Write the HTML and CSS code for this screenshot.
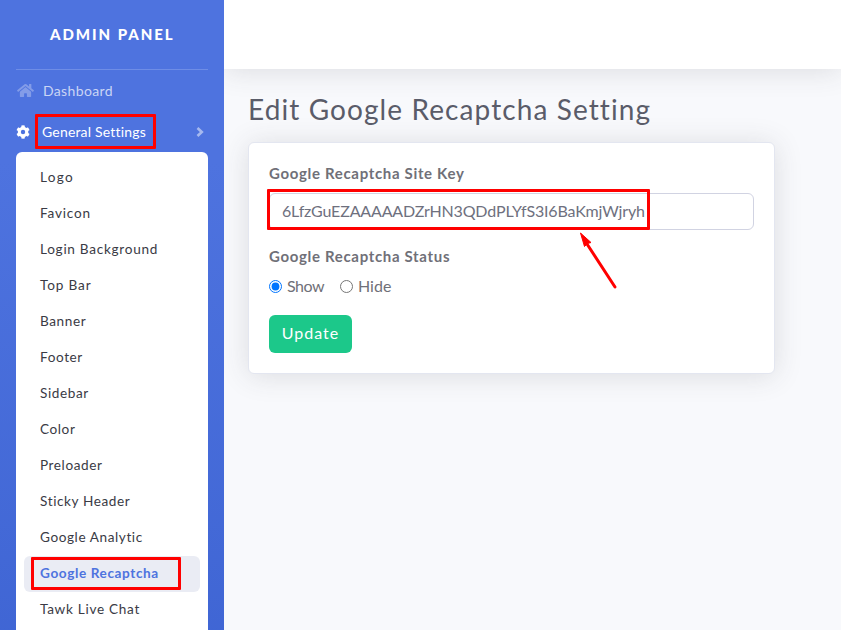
FILE: index.html
```html
<!DOCTYPE html>
<html lang="en">
<head>
<meta charset="utf-8">
<title>Admin Panel</title>
<link rel="stylesheet" href="styles.css">
</head>
<body>
<div class="wrapper">
  <nav class="sidebar">
    <div class="brand"><span>ADMIN PANEL</span></div>
    <hr class="divider">
    <a class="nav-link dashboard">
      <svg class="home" viewBox="0 0 576 512"><path d="M280 148L96 300v164q0 16 16 16h112q16-1 16-16v-96q0-16 16-16h64q16 0 16 16v96q0 16 16 16h112q16 0 16-16V300L296 148q-8-6-16 0zM572 251l-84-69V44q0-12-12-12h-56q-12 0-12 12v72l-90-74q-30-24-60 0L4 251q-8 8-1 17l25 31q8 8 17 2L280 107q8-6 16 0l235 194q9 7 17-2l25-31q7-9-1-17z"/></svg>
      <span>Dashboard</span>
    </a>
    <a class="nav-link general">
      <svg class="gear" viewBox="0 0 512 512"><path fill-rule="evenodd" d="M487 316l-42-25q7-35 0-70l42-25q8-4 6-13-17-53-54-94-6-7-14-2l-43 24q-27-23-60-35V27q0-9-9-11-57-12-110 0-9 2-9 11v49q-33 12-60 35L91 87q-8-5-14 2-37 41-54 94-2 9 6 13l42 25q-7 35 0 70l-42 25q-8 4-6 13 17 53 54 94 6 7 14 2l43-24q27 23 60 35v49q0 9 9 11 57 12 110 0 9-2 9-11v-49q33-12 60-35l43 24q8 5 14-2 37-41 54-94 2-9-6-13zM256 336a80 80 0 1 1 0-160 80 80 0 0 1 0 160z"/></svg>
      <span>General Settings</span>
      <svg class="chevron" viewBox="0 0 8 10"><path d="M1.5 1L5.8 5 1.5 9"/></svg>
    </a>
    <div class="submenu">
      <a class="item logo">Logo</a>
      <a class="item favicon">Favicon</a>
      <a class="item login">Login Background</a>
      <a class="item topbar-link">Top Bar</a>
      <a class="item banner">Banner</a>
      <a class="item footer">Footer</a>
      <a class="item side">Sidebar</a>
      <a class="item color">Color</a>
      <a class="item preloader">Preloader</a>
      <a class="item sticky">Sticky Header</a>
      <a class="item analytic">Google Analytic</a>
      <a class="item active">Google Recaptcha</a>
      <a class="item tawk">Tawk Live Chat</a>
    </div>
  </nav>
  <div class="content">
    <header class="topbar"></header>
    <main>
      <h1>Edit Google Recaptcha Setting</h1>
      <form class="card">
        <label class="label site-key" for="key">Google Recaptcha Site Key</label>
        <input class="control" id="key" type="text" value="6LfzGuEZAAAAADZrHN3QDdPLYfS3I6BaKmjWjryh">
        <div class="label status">Google Recaptcha Status</div>
        <div class="radios">
          <label class="show"><input type="radio" name="status" checked><span>Show</span></label>
          <label class="hide"><input type="radio" name="status"><span>Hide</span></label>
        </div>
        <button class="update" type="button">Update</button>
      </form>
    </main>
  </div>
</div>
<div class="mark mark-general"></div>
<div class="mark mark-recaptcha"></div>
<div class="mark mark-key"></div>
<svg class="arrow" viewBox="0 0 40 60"><path class="shaft" d="M36 56L8 13"/><path class="head" d="M1.5 2L12 11.5 8.5 12.5 5.5 15.5z"/></svg>
</body>
</html>
```
FILE: styles.css
```css
* { box-sizing: border-box; }
body {
  margin: 0;
  height: 630px;
  overflow: hidden;
  font: 16px/24px Lato, "Open Sans", sans-serif;
  color: #707078;
  background: #f8f9fc;
}
.wrapper { display: flex; height: 630px; }
.sidebar {
  flex: 0 0 224px;
  overflow: hidden;
  background: linear-gradient(180deg, #4e73df 10%, #224abe 100%) 0 0 / 100% 1620px no-repeat;
}
.brand {
  height: 69px;
  padding-left: 50px;
  line-height: 68px;
  color: #fff;
  font-size: 15px;
  font-weight: 900;
  letter-spacing: 1.95px;
  white-space: nowrap;
}
.divider { height: 1px; margin: 0 16px; border: 0; background: #6e8de6; }
.nav-link {
  display: flex;
  align-items: center;
  height: 41px;
  color: #cad5f5;
  font-size: 14px;
  white-space: nowrap;
}
.nav-link svg { flex: none; fill: currentColor; }
.dashboard { letter-spacing: .35px; }
.nav-link .home { width: 17px; height: 15px; margin: 0 9px 0 17px; color: #839ce8; }
.general { color: #fff; letter-spacing: .18px; }
.gear { width: 14px; height: 14px; margin: 0 12px 0 16px; }
.nav-link .chevron { width: 8px; height: 10px; margin: 0 20px 0 auto; fill: none; stroke: #a6b9ef; stroke-width: 2.6; }
.submenu {
  height: 520px;
  margin: 0 16px;
  padding: 8px;
  border-radius: 6px;
  background: #fff;
}
.item {
  display: block;
  height: 36px;
  padding-left: 16px;
  border-radius: 6px;
  color: #3a3b45;
  font-size: 13.6px;
  line-height: 35px;
  letter-spacing: .58px;
  white-space: nowrap;
}
.logo { letter-spacing: 1.3px; }
.favicon { letter-spacing: .8px; }
.login { letter-spacing: .72px; }
.topbar-link { letter-spacing: .85px; }
.sticky { letter-spacing: .6px; }
.tawk { letter-spacing: .7px; }
.active { background: #eaecf4; color: #4e73df; font-weight: 700; letter-spacing: .6px; }
.content { flex: 1; min-width: 0; overflow: hidden; }
.topbar { height: 69px; background: #fff; box-shadow: 0 2px 28px rgba(58, 59, 69, .15); }
main { padding: 24px 24px; }
h1 {
  margin: 0 0 16px;
  color: #5a5c69;
  font-size: 28px;
  font-weight: 400;
  line-height: 33px;
  letter-spacing: 1.1px;
  white-space: nowrap;
}
.card {
  width: 527px;
  height: 232px;
  padding: 18px 20px;
  border: 1px solid #e3e6f0;
  border-radius: 6px;
  background: #fff;
  box-shadow: 0 2px 28px rgba(58, 59, 69, .15);
}
.label { display: block; height: 32px; font-size: 15px; font-weight: 700; line-height: 24px; letter-spacing: .67px; }
.control {
  display: block;
  width: 485px;
  height: 37px;
  margin: 0 0 14px;
  padding: 0 12px 2px;
  border: 1px solid #d1d3e2;
  border-radius: 6px;
  color: #6e707e;
  background: #fff;
  font: 16px Lato, "Open Sans", sans-serif;
  letter-spacing: -.16px;
}
.radios { display: flex; gap: 16px; height: 24px; margin: -2px 0 17px; }
.radios label { display: flex; align-items: center; }
.radios input { width: 13px; height: 13px; margin: 0 5px 0 0; accent-color: #0075ff; }
.show { letter-spacing: -.5px; }
.update {
  width: 83px;
  height: 38px;
  padding: 0 0 3px;
  border: 0;
  border-radius: 6px;
  background: #1cc88a;
  color: #fff;
  font: 16px Lato, "Open Sans", sans-serif;
  letter-spacing: 1px;
}
.mark { position: absolute; border: 3px solid #f00; border-radius: 1px; }
.mark-general { left: 35px; top: 114px; width: 121px; height: 35px; }
.mark-recaptcha { left: 31px; top: 557px; width: 150px; height: 33px; }
.mark-key { left: 267px; top: 189px; width: 383px; height: 41px; }
.arrow { position: absolute; left: 579px; top: 231px; width: 40px; height: 60px; }
.shaft { stroke: #f00; stroke-width: 3; stroke-linecap: round; }
.head { fill: #f00; stroke: #f00; }
```
